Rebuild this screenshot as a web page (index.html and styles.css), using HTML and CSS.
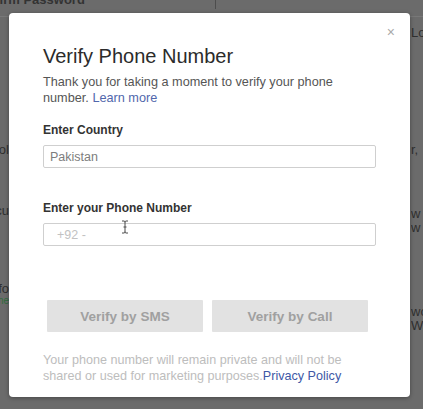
FILE: index.html
```html
<!DOCTYPE html>
<html lang="en">
<head>
  <meta charset="UTF-8">
  <meta name="viewport" content="width=device-width, initial-scale=1.0">
  <title>Verify Phone Number</title>
  <link rel="stylesheet" href="styles.css">
</head>
<body>

  <!-- page behind the dialog -->
  <div class="page">
    <div class="top-bar">
      <div class="top-cell"><span class="top-label">Confirm Password</span></div>
    </div>
    <div class="sides">
      <div class="side side-left">
        <div class="frag f-150">Control</div>
        <div class="frag f-211">Secu</div>
        <div class="frag f-289">Info</div>
        <div class="frag f-green">Done</div>
      </div>
      <div class="side side-right">
        <div class="frag r-33">Look</div>
        <div class="frag r-150">r,</div>
        <div class="frag r-214">w</div>
        <div class="frag r-228">w</div>
        <div class="frag r-312">wo</div>
        <div class="frag r-325">Wa</div>
      </div>
    </div>
  </div>

  <div class="overlay">
    <div class="modal">
      <span class="close">&times;</span>

      <h2>Verify Phone Number</h2>
      <p class="intro">Thank you for taking a moment to verify your phone number. <a href="#">Learn more</a></p>

      <label>Enter Country</label>
      <input type="text" class="field country" value="Pakistan">

      <label class="phone-label">Enter your Phone Number</label>
      <div class="phone-wrap">
        <input type="text" class="field phone" placeholder="+92 -">
        <svg class="ibeam" width="8" height="14" viewBox="0 0 8 14">
          <path d="M1 1 H3 Q4 1 4 2.5 V11.5 Q4 13 3 13 H1 M7 1 H5 Q4 1 4 2.5 M4 11.5 Q4 13 5 13 H7 M2.5 7 H5.5" fill="none" stroke="#4a4a4a" stroke-width="1"/>
        </svg>
      </div>

      <div class="buttons">
        <button>Verify by SMS</button>
        <button>Verify by Call</button>
      </div>

      <p class="note">Your phone number will remain private and will not be shared or used for marketing purposes.<a href="#">Privacy Policy</a></p>
    </div>
  </div>

</body>
</html>
```

FILE: styles.css
```css
body {
  margin: 0;
  width: 423px;
  height: 409px;
  overflow: hidden;
  background: #6b6b6b;
  font-family: "Liberation Sans", Arial, sans-serif;
  position: relative;
}

/* background page */
.page {
  height: 409px;
  color: #2f2f2f;
  font-size: 13px;
}

.top-bar {
  height: 16px;
  border-bottom: 1px solid #787878;
  display: flex;
}

.top-cell {
  width: 215px;
  height: 9px;
  border-right: 1px solid #4d4d4d;
  overflow: hidden;
}

.top-label {
  display: block;
  margin: -7px 0 0 -30px;
  font-weight: bold;
  line-height: 14px;
  color: #333;
}

.sides {
  display: flex;
  justify-content: space-between;
}

.side {
  display: flex;
  flex-direction: column;
  white-space: nowrap;
  overflow: hidden;
}

.side-left {
  width: 9px;
  align-items: flex-end;
}

.side-right {
  width: 12px;
}

.frag {
  line-height: 14px;
  height: 14px;
}

.f-150 { margin-top: 126px; }
.f-211 { margin-top: 47px; }
.f-289 { margin-top: 64px; }
.f-green { margin-top: -2px; font-size: 10px; color: #2f6b3d; }

.r-33 { margin-top: 9px; }
.r-150 { margin-top: 103px; }
.r-214 { margin-top: 50px; }
.r-228 { margin-top: 0; }
.r-312 { margin-top: 70px; }
.r-325 { margin-top: 0; }

/* dialog */
.overlay {
  position: absolute;
  top: 0;
  left: 0;
  right: 0;
  bottom: 0;
  padding: 13px 0 0 9px;
}

.modal {
  position: relative;
  box-sizing: border-box;
  width: 401px;
  height: 384px;
  padding: 31px 34px 0 34px;
  background: #fff;
  border-radius: 4px;
  box-shadow: 0 1px 4px rgba(0, 0, 0, 0.35);
}

.close {
  position: absolute;
  top: 12px;
  right: 15px;
  font-size: 14px;
  line-height: 14px;
  color: #aaa;
}

h2 {
  margin: 0;
  font-size: 20px;
  line-height: 24px;
  font-weight: normal;
  color: #2b2b2b;
}

.intro {
  margin: 6px 0 0;
  font-size: 12.7px;
  line-height: 16px;
  color: #555;
}

a {
  color: #5167ac;
  text-decoration: none;
}

label {
  display: block;
  margin-top: 16px;
  font-size: 12px;
  line-height: 16px;
  font-weight: bold;
  color: #333;
}

.phone-label {
  margin-top: 32px;
}

.field {
  display: block;
  box-sizing: border-box;
  width: 100%;
  height: 23px;
  margin-top: 7px;
  padding: 0 6px;
  border: 1px solid #cfcfcf;
  border-radius: 2px;
  font-family: inherit;
  font-size: 12.5px;
  color: #7d7d7d;
  outline: none;
}

.phone {
  padding-left: 13px;
}

.phone::placeholder {
  color: #c2c2c2;
}

.phone-wrap {
  position: relative;
}

.ibeam {
  position: absolute;
  left: 78px;
  top: -3px;
}

.buttons {
  display: flex;
  gap: 9px;
  margin-top: 54px;
  padding-left: 4px;
}

button {
  width: 156px;
  height: 32px;
  border: none;
  border-radius: 1px;
  background: #e2e2e2;
  color: #a0a0a0;
  font-family: inherit;
  font-size: 13.5px;
  font-weight: bold;
}

.note {
  margin: 20px 0 0;
  font-size: 12.6px;
  line-height: 16px;
  color: #bdbdbd;
}

.note a {
  color: #4058a6;
}
```
